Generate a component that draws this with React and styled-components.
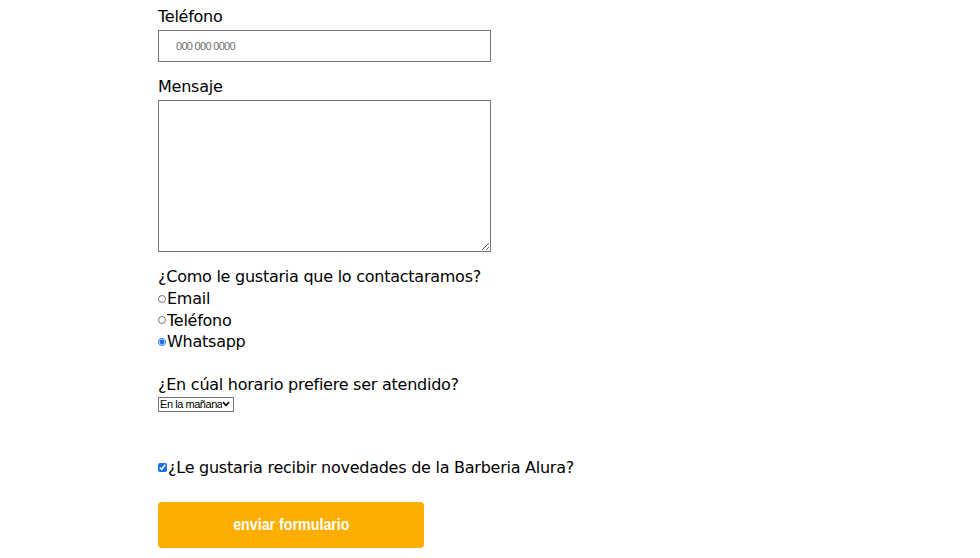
import React from "react";
import styled, { createGlobalStyle } from "styled-components";

const Global = createGlobalStyle`
  html, body { margin: 0; padding: 0; background: #fff; }
  body { font-family: "DejaVu Sans", Verdana, sans-serif; color: #000; }
`;

const Form = styled.form`
  display: flex;
  flex-direction: column;
  align-items: flex-start;
  padding: 6px 0 0 158px;
  width: 333px;
`;

const Label = styled.label`
  display: block;
  font-size: 16px;
  letter-spacing: -0.25px;
  line-height: 22px;
  white-space: nowrap;
  margin-top: ${(p) => p.$top || 0}px;
`;

const Input = styled.input`
  box-sizing: border-box;
  width: 333px;
  height: 32px;
  margin-top: 2px;
  border: 1px solid #767676;
  padding: 0 0 0 17px;
  font-family: "Liberation Sans", Arial, sans-serif;
  font-size: 11px;
  letter-spacing: -0.7px;
  &::placeholder { color: #6f6f6f; }
`;

const TextArea = styled.textarea`
  box-sizing: border-box;
  width: 333px;
  height: 152px;
  margin: 2px 0 0;
  border: 1px solid #767676;
  display: block;
`;

const Option = styled.label`
  display: flex;
  align-items: center;
  font-size: 16px;
  letter-spacing: -0.25px;
  line-height: 21.5px;
  white-space: nowrap;
  margin-top: ${(p) => p.$top || 0}px;
`;

const Radio = styled.input`
  width: 8px;
  height: 8px;
  margin: 0 1px 0 0;
  accent-color: #1a73e8;
`;

const SelectBox = styled.div`
  box-sizing: border-box;
  display: inline-flex;
  align-items: center;
  width: 76px;
  height: 15px;
  margin-top: 1px;
  border: 1px solid #767676;
  background: #fff;
  padding-right: 3px;
`;

const Select = styled.select`
  appearance: none;
  -webkit-appearance: none;
  flex: 1;
  min-width: 0;
  font-family: "Liberation Sans", Arial, sans-serif;
  font-size: 11px;
  letter-spacing: -0.45px;
  height: 13px;
  line-height: 13px;
  padding: 0 0 0 1px;
  margin: 0;
  border: none;
  outline: none;
  background: transparent;
  color: #000;
`;

const Check = styled.input`
  width: 9px;
  height: 9px;
  margin: 0 1px 0 0;
  accent-color: #1a73e8;
`;

const Button = styled.button`
  margin-top: 24px;
  width: 266px;
  height: 46px;
  border: none;
  border-radius: 4px;
  background: #fdae00;
  color: #fff;
  font-family: "Liberation Sans", Arial, sans-serif;
  font-weight: bold;
  font-size: 16px;
`;

const Condensed = styled.span`
  display: inline-block;
  transform: scaleX(0.89);
`;

export default function App() {
  return (
    <>
      <Global />
      <Form onSubmit={(e) => e.preventDefault()}>
        <Label htmlFor="tel">Teléfono</Label>
        <Input id="tel" placeholder="000 000 0000" />
        <Label htmlFor="msg" $top={14}>Mensaje</Label>
        <TextArea id="msg" />
        <Label $top={14}>¿Como le gustaria que lo contactaramos?</Label>
        <Option><Radio type="radio" name="c" />Email</Option>
        <Option><Radio type="radio" name="c" />Teléfono</Option>
        <Option><Radio type="radio" name="c" defaultChecked />Whatsapp</Option>
        <Label $top={21}>¿En cúal horario prefiere ser atendido?</Label>
        <SelectBox>
          <Select defaultValue="m">
            <option value="m">En la mañana</option>
            <option value="t">En la tarde</option>
          </Select>
          <svg width="8" height="6" viewBox="0 0 8 6" aria-hidden="true">
            <path d="M1 1.2 L4 4.3 L7 1.2" fill="none" stroke="#000" strokeWidth="1.7" />
          </svg>
        </SelectBox>
        <Option $top={45}>
          <Check type="checkbox" defaultChecked />¿Le gustaria recibir novedades de la Barberia Alura?
        </Option>
        <Button type="submit"><Condensed>enviar formulario</Condensed></Button>
      </Form>
    </>
  );
}
